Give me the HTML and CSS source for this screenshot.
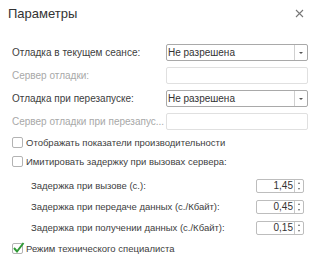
FILE: index.html
```html
<!DOCTYPE html>
<html>
	<head>
		<meta charset="utf-8">
		<title>Параметры</title>
		<link rel="stylesheet" href="styles.css">
	</head>
	<body>
		<div class="dialog">
			<div class="header">
				<span class="title">Параметры</span>
				<svg class="close" width="9" height="9" viewBox="0 0 9 9">
					<path d="M1 1L8 8M8 1L1 8" stroke="#777" stroke-width="1.1" fill="none"/>
				</svg>
			</div>
			<div class="form">
				<div class="row">
					<span class="label">Отладка в текущем сеансе:</span>
					<div class="combo">
						<span class="value">Не разрешена</span>
						<span class="btn"><i class="arrow"></i></span>
					</div>
				</div>
				<div class="row">
					<span class="label disabled">Сервер отладки:</span>
					<div class="input"></div>
				</div>
				<div class="row">
					<span class="label">Отладка при перезапуске:</span>
					<div class="combo">
						<span class="value">Не разрешена</span>
						<span class="btn"><i class="arrow"></i></span>
					</div>
				</div>
				<div class="row">
					<span class="label disabled">Сервер отладки при перезапус...</span>
					<div class="input"></div>
				</div>

				<div class="check">
					<span class="box"></span>
					<span>Отображать показатели производительности</span>
				</div>
				<div class="check">
					<span class="box"></span>
					<span>Имитировать задержку при вызовах сервера:</span>
				</div>

				<div class="delays">
					<div class="delay">
						<span class="dlabel">Задержка при вызове (с.):</span>
						<div class="spin">
							<span class="num">1,45</span>
							<span class="spinBtn"><i class="up"></i><i class="down"></i></span>
						</div>
					</div>
					<div class="delay">
						<span class="dlabel">Задержка при передаче данных (с./Кбайт):</span>
						<div class="spin">
							<span class="num">0,45</span>
							<span class="spinBtn"><i class="up"></i><i class="down"></i></span>
						</div>
					</div>
					<div class="delay">
						<span class="dlabel">Задержка при получении данных (с./Кбайт):</span>
						<div class="spin">
							<span class="num">0,15</span>
							<span class="spinBtn"><i class="up"></i><i class="down"></i></span>
						</div>
					</div>
				</div>

				<div class="check last">
					<span class="box">
						<svg width="13" height="13" viewBox="0 0 13 13">
							<path d="M2 7L5 10.5L11.5 2" stroke="#2f9a35" stroke-width="2" fill="none"/>
						</svg>
					</span>
					<span>Режим технического специалиста</span>
				</div>
			</div>
		</div>
	</body>
</html>
```

FILE: styles.css
```css
*{
	padding: 0;
	margin: 0;
	box-sizing: border-box;
}
body{
	background-color: #fff;
	font-family: "Liberation Sans", Arial, sans-serif;
	font-size: 10px;
	color: #404040;
}
.dialog{
	width: 329px;
	height: 272px;
}
.header{
	display: flex;
	align-items: center;
	justify-content: space-between;
	height: 27px;
	padding: 0 25px 0 8px;
}
.header .title{
	font-size: 13px;
	color: #333;
}
.form{
	padding: 14px 21px 0 12px;
}
.row{
	display: flex;
	align-items: center;
	height: 23px;
}
.label{
	width: 154px;
	flex: none;
	white-space: nowrap;
}
.disabled{
	color: #a8a8a8;
}
.combo{
	display: flex;
	width: 142px;
	height: 17px;
	border: 1px solid #a9a9a9;
	border-radius: 2px;
	background-color: #fff;
}
.combo .value{
	flex: 1;
	padding-left: 1px;
	line-height: 15px;
	color: #333;
}
.combo .btn{
	display: flex;
	align-items: center;
	justify-content: center;
	width: 13px;
	border-left: 1px solid #d0d0d0;
}
.arrow{
	width: 0;
	height: 0;
	border-left: 2px solid transparent;
	border-right: 2px solid transparent;
	border-top: 2px solid #555;
}
.input{
	width: 142px;
	height: 17px;
	border: 1px solid #e0e0e0;
	border-radius: 2px;
}
.check{
	display: flex;
	align-items: center;
	height: 19px;
	font-size: 9.5px;
}
.check .box{
	position: relative;
	width: 11px;
	height: 11px;
	border: 1px solid #b3b3b3;
	border-radius: 2px;
	margin-right: 3px;
	flex: none;
}
.check .box svg{
	position: absolute;
	left: -1px;
	top: -3px;
}
.delays{
	padding: 4px 4px 0 19px;
}
.delay{
	display: flex;
	align-items: center;
	justify-content: space-between;
	height: 21px;
	font-size: 9.5px;
}
.spin{
	display: flex;
	width: 48px;
	height: 14px;
	border: 1px solid #bdbdbd;
	border-radius: 2px;
}
.spin .num{
	flex: 1;
	text-align: right;
	line-height: 12px;
	padding-right: 1px;
	font-size: 10px;
	color: #333;
}
.spinBtn{
	display: flex;
	flex-direction: column;
	align-items: center;
	justify-content: space-between;
	width: 9px;
	border-left: 1px solid #c8c8c8;
	padding: 2px 0;
}
.spinBtn i{
	width: 0;
	height: 0;
	border-left: 1.5px solid transparent;
	border-right: 1.5px solid transparent;
}
.spinBtn .up{
	border-bottom: 2px solid #666;
}
.spinBtn .down{
	border-top: 2px solid #666;
}
.check.last{
	height: 21px;
}
```
